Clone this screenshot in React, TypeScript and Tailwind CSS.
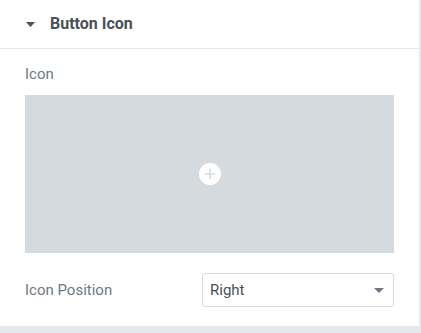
import React from 'react';

const App: React.FC = () => {
  return (
    <div className="flex w-[421px] h-[333px] bg-white font-['Roboto',sans-serif] overflow-hidden">
      <div className="flex flex-col w-[419px] h-full">
        {/* Section header */}
        <div className="flex items-center h-[49px] shrink-0 border-b border-[#e6e9ec] pl-[26px]">
          <svg width="9" height="5" viewBox="0 0 9 5" className="mr-[15px]">
            <path d="M0 0 L9 0 L4.5 5 Z" fill="#495157" />
          </svg>
          <span className="text-[16px] font-bold text-[#495157]">Button Icon</span>
        </div>

        {/* Controls */}
        <div className="flex flex-col flex-1 px-[25px] pt-[17px]">
          <label className="text-[15px] text-[#6d7882] leading-[17px]">Icon</label>
          <div className="mt-[12px] h-[158px] w-[369px] bg-[#d5dadf] flex items-center justify-center">
            <div className="w-[22px] h-[22px] rounded-full bg-white flex items-center justify-center">
              <svg width="12" height="12" viewBox="0 0 12 12">
                <path d="M6 1 V11 M1 6 H11" stroke="#d5dadf" strokeWidth="1.6" />
              </svg>
            </div>
          </div>

          <div className="flex items-center mt-[20px]">
            <label className="w-[177px] text-[15px] text-[#6d7882]">Icon Position</label>
            <div className="flex items-center justify-between w-[192px] h-[34px] border border-[#d5dadf] rounded-[3px] pl-[7px] pr-[9px]">
              <span className="text-[15px] text-[#495157]">Right</span>
              <svg width="10" height="5" viewBox="0 0 10 5">
                <path d="M0 0 L10 0 L5 5 Z" fill="#6d7882" />
              </svg>
            </div>
          </div>
        </div>

        <div className="h-[7px] shrink-0 bg-[#e6e9ec]" />
      </div>
      <div className="w-[2px] h-full bg-[#e6e9ec]" />
    </div>
  );
};

export default App;
